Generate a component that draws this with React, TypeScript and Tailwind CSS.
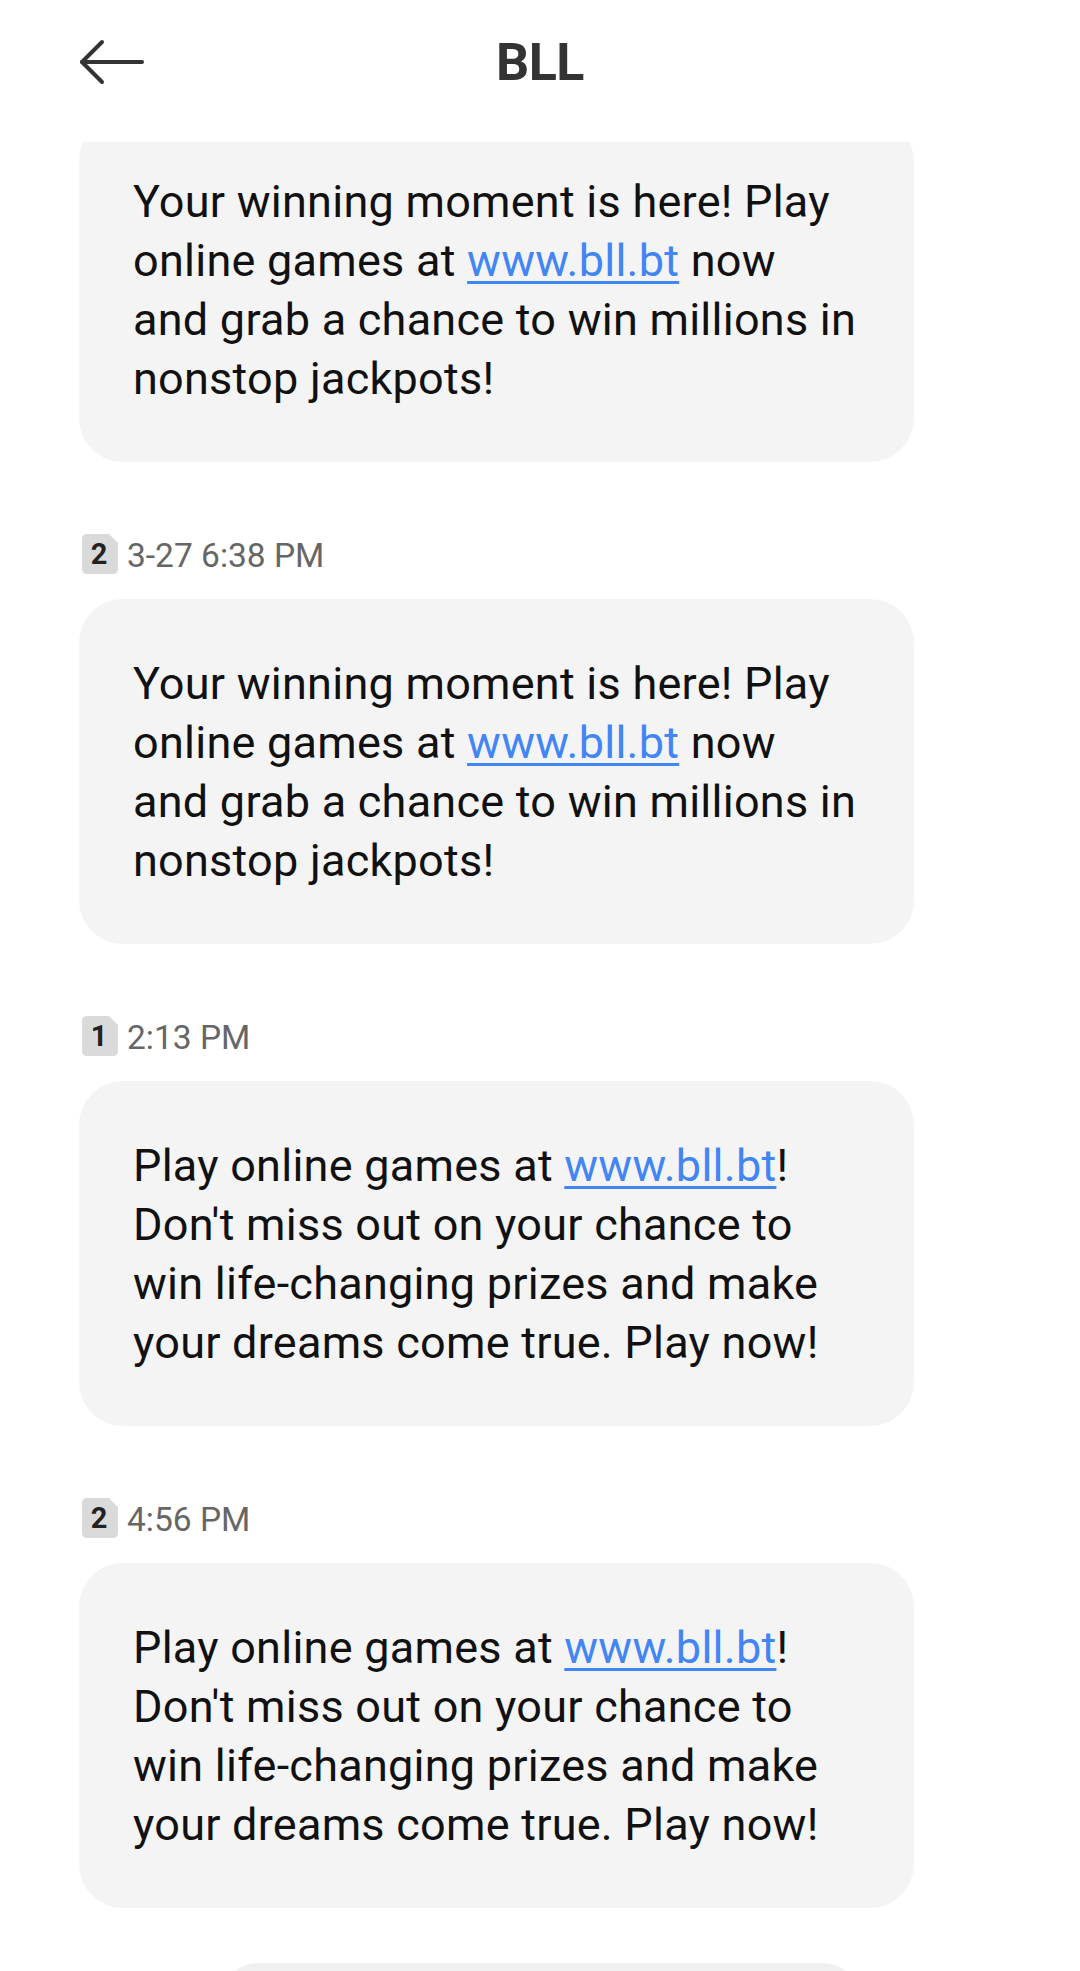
import type { ReactNode } from 'react'

type Message = {
  sim?: string
  time?: string
  lines: ReactNode[]
}

const Link = () => (
  <span className="text-[#4285f4] underline decoration-[2.5px] underline-offset-[5px]">www.bll.bt</span>
)

const winLines: ReactNode[] = [
  'Your winning moment is here! Play',
  <>online games at <Link /> now</>,
  'and grab a chance to win millions in',
  'nonstop jackpots!',
]

const playLines: ReactNode[] = [
  <>Play online games at <Link />!</>,
  "Don't miss out on your chance to",
  'win life-changing prizes and make',
  'your dreams come true. Play now!',
]

const messages: Message[] = [
  { lines: winLines },
  { sim: '2', time: '3-27 6:38 PM', lines: winLines },
  { sim: '1', time: '2:13 PM', lines: playLines },
  { sim: '2', time: '4:56 PM', lines: playLines },
]

function SimBadge({ n }: { n: string }) {
  return (
    <div className="relative ml-[3px] w-[36px] h-[40px] shrink-0">
      <svg width="36" height="40" viewBox="0 0 36 40" className="absolute inset-0">
        <path d="M5 0 H27 L36 9 V35 Q36 40 31 40 H5 Q0 40 0 35 V5 Q0 0 5 0 Z" fill="#dadada" />
      </svg>
      <span className="relative flex h-full items-center justify-center text-[29px] font-bold leading-none text-[#222] pr-[2px]">
        {n}
      </span>
    </div>
  )
}

function BackArrow() {
  return (
    <svg width="66" height="48" viewBox="0 0 66 48" fill="none" stroke="#333" strokeWidth="4" strokeLinecap="round" strokeLinejoin="round">
      <path d="M63 23 H3" />
      <path d="M23 3 L3 23 L23 43" />
    </svg>
  )
}

export default function App() {
  return (
    <div className="w-[1080px] h-[1971px] overflow-hidden bg-white flex flex-col font-['Roboto',sans-serif]">
      {/* header sits above the scrolled list */}
      <header className="relative z-10 h-[142px] shrink-0 bg-white grid grid-cols-[1fr_auto_1fr] items-center pb-[16px]">
        <div className="pl-[79px] flex items-center">
          <BackArrow />
        </div>
        <h1 className="text-[52px] font-bold leading-none text-[#333] tracking-[-0.5px]">BLL</h1>
        <div />
      </header>

      <main className="flex-1 overflow-hidden">
        <div className="-mt-[25px] flex flex-col px-[79px]">
          {messages.map((m, i) => (
            <div key={i} className="flex flex-col">
              {m.time && (
                <div className="mt-[72px] mb-[25px] flex items-center h-[40px]">
                  <SimBadge n={m.sim ?? '1'} />
                  <span className="ml-[9px] text-[33.5px] leading-none text-[#666] pt-[3px]">{m.time}</span>
                </div>
              )}
              <div className="w-[835px] rounded-[44px] bg-[#f4f4f4] pl-[54px] pr-[30px] pt-[55px] pb-[54px]">
                {m.lines.map((l, j) => (
                  <div key={j} className="whitespace-nowrap text-[45px] leading-[59px] tracking-[0.25px] text-[#111]">
                    {l}
                  </div>
                ))}
              </div>
            </div>
          ))}
          {/* next message, cut off by the screen edge */}
          <div className="mt-[55px] ml-[140px] w-[643px] h-[40px] rounded-t-[40px] bg-[#f0f0f0]" />
        </div>
      </main>
    </div>
  )
}
